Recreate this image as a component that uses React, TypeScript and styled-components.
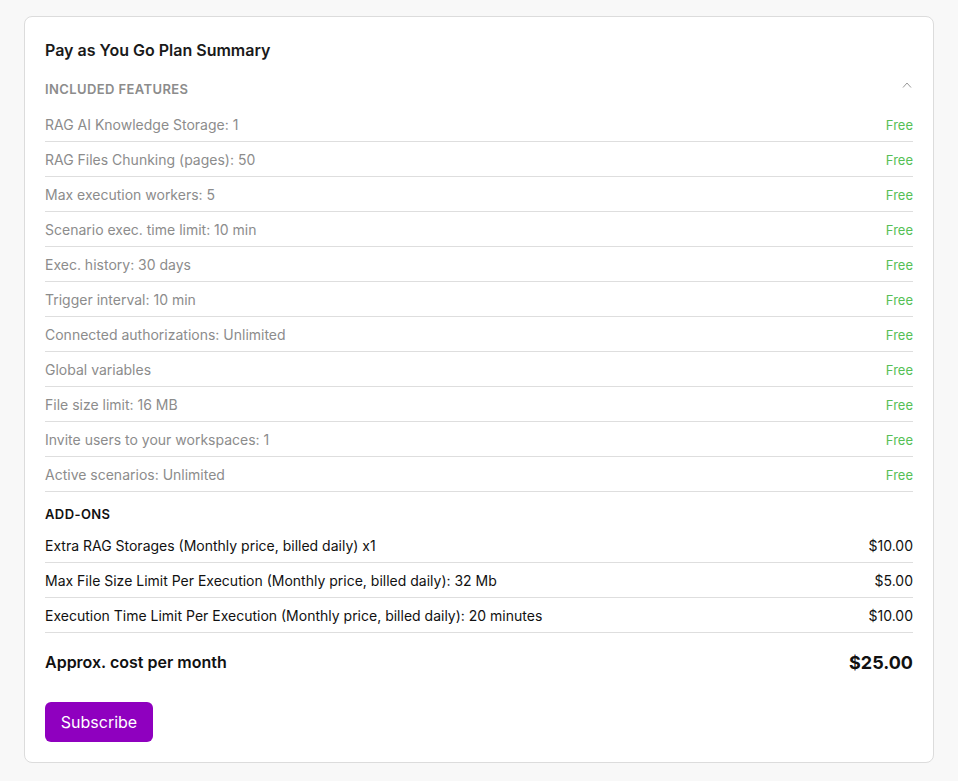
import React from "react";
import styled, { createGlobalStyle } from "styled-components";

const Global = createGlobalStyle`
  html, body { margin: 0; padding: 0; background: #f8f8f8; }
  body { font-family: Inter, "Noto Sans", sans-serif; -webkit-font-smoothing: antialiased; }
  * { box-sizing: border-box; }
`;

const Page = styled.div`
  padding: 16px 24px 18px;
`;

const Card = styled.section`
  background: #fff;
  border: 1px solid #dcdcdc;
  border-radius: 8px;
  padding: 21px 20px 20px;
  display: flex;
  flex-direction: column;
`;

const Title = styled.h2`
  margin: 0;
  font-size: 16px;
  line-height: 24px;
  font-weight: 600;
  color: #1a1a1a;
`;

const SectionHeader = styled.div`
  margin-top: 18px;
  display: flex;
  justify-content: space-between;
  align-items: flex-start;
  height: 18px;
  margin-bottom: 9px;
`;

const SectionLabel = styled.span<{ $dark?: boolean }>`
  font-size: 13px;
  line-height: 18px;
  font-weight: 600;
  letter-spacing: 0.4px;
  text-transform: uppercase;
  color: ${(p) => (p.$dark ? "#111" : "#8c8c8c")};
`;

const Chevron = styled.svg`
  width: 10px;
  height: 8px;
  margin-top: 1px;
  margin-right: 1px;
`;

const List = styled.div`
  display: flex;
  flex-direction: column;
`;

const Row = styled.div<{ $muted?: boolean }>`
  display: flex;
  justify-content: space-between;
  align-items: center;
  padding: 9px 0 7px;
  line-height: 18px;
  border-bottom: 1px solid #dedede;
  font-size: 14px;
  color: ${(p) => (p.$muted ? "#8c8c8c" : "#111")};
`;

const Free = styled.span`
  color: #55c055;
  font-size: 13px;
`;

const Price = styled.span`
  font-size: 14px;
  color: #111;
`;

const AddonsHeader = styled.div`
  margin-top: 11px;
  margin-bottom: 7px;
  height: 18px;
`;

const Total = styled.div`
  margin-top: 15px;
  display: flex;
  justify-content: space-between;
  align-items: center;
  height: 28px;
`;

const TotalLabel = styled.span`
  font-size: 16px;
  font-weight: 600;
  color: #111;
`;

const TotalValue = styled.span`
  font-size: 18px;
  font-weight: 700;
  color: #111;
`;

const Button = styled.button`
  margin-top: 26px;
  align-self: flex-start;
  height: 40px;
  width: 108px;
  border: none;
  border-radius: 6px;
  background: #8f00bf;
  color: #fff;
  font-family: inherit;
  font-size: 16px;
  font-weight: 400;
  cursor: pointer;
`;

const features = [
  "RAG AI Knowledge Storage: 1",
  "RAG Files Chunking (pages): 50",
  "Max execution workers: 5",
  "Scenario exec. time limit: 10 min",
  "Exec. history: 30 days",
  "Trigger interval: 10 min",
  "Connected authorizations: Unlimited",
  "Global variables",
  "File size limit: 16 MB",
  "Invite users to your workspaces: 1",
  "Active scenarios: Unlimited",
];

const addons: [string, string][] = [
  ["Extra RAG Storages (Monthly price, billed daily) x1", "$10.00"],
  ["Max File Size Limit Per Execution (Monthly price, billed daily): 32 Mb", "$5.00"],
  ["Execution Time Limit Per Execution (Monthly price, billed daily): 20 minutes", "$10.00"],
];

export default function App() {
  return (
    <>
      <Global />
      <Page>
        <Card>
          <Title>Pay as You Go Plan Summary</Title>
          <SectionHeader>
            <SectionLabel>Included Features</SectionLabel>
            <Chevron viewBox="0 0 10 8">
              <polyline points="1,6.5 5,2 9,6.5" fill="none" stroke="#9a9a9a" strokeWidth="1" />
            </Chevron>
          </SectionHeader>
          <List>
            {features.map((f) => (
              <Row $muted key={f}>
                <span>{f}</span>
                <Free>Free</Free>
              </Row>
            ))}
          </List>
          <AddonsHeader>
            <SectionLabel $dark>Add-ons</SectionLabel>
          </AddonsHeader>
          <List>
            {addons.map(([n, p]) => (
              <Row key={n}>
                <span>{n}</span>
                <Price>{p}</Price>
              </Row>
            ))}
          </List>
          <Total>
            <TotalLabel>Approx. cost per month</TotalLabel>
            <TotalValue>$25.00</TotalValue>
          </Total>
          <Button>Subscribe</Button>
        </Card>
      </Page>
    </>
  );
}
